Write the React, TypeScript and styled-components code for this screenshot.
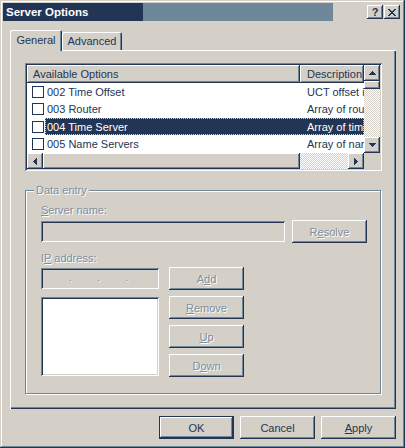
import React from 'react'
import styled, { createGlobalStyle, css } from 'styled-components'

const FACE = '#d4d0c8'
const DARK = '#233554'
const SHADOW = '#6f8899'
const WHITE = '#ffffff'
const DISABLED = '#7d8e9d'

const GlobalStyle = createGlobalStyle`
  html, body { margin: 0; padding: 0; background: ${FACE}; }
  body {
    font-family: "Liberation Sans", Arial, sans-serif;
    font-size: 11px;
    color: ${DARK};
  }
  * { box-sizing: border-box; }
`

const raised = css`
  box-shadow: inset -1px -1px ${DARK}, inset 1px 1px ${WHITE}, inset -2px -2px ${SHADOW}, inset 2px 2px ${FACE};
`
const sunken = css`
  box-shadow: inset 1px 1px ${SHADOW}, inset -1px -1px ${WHITE}, inset 2px 2px ${DARK}, inset -2px -2px ${FACE};
`
const disabledText = css`
  color: ${DISABLED};
  text-shadow: 1px 1px 0 ${WHITE};
`

const Window = styled.div`
  width: 405px;
  height: 448px;
  padding: 3px;
  display: flex;
  flex-direction: column;
  background: ${FACE};
  box-shadow: inset -1px -1px ${DARK}, inset 1px 1px ${FACE}, inset -2px -2px ${SHADOW}, inset 2px 2px ${WHITE};
`

const TitleBar = styled.div`
  height: 18px;
  display: flex;
  align-items: center;
  padding: 0 2px 0 3px;
  background: linear-gradient(to right, ${DARK} 0 140px, ${SHADOW} 140px 330px, ${FACE} 330px);
`

const Title = styled.div`
  flex: 1;
  color: ${WHITE};
  font-weight: bold;
  font-size: 11.5px;
  line-height: 18px;
`

const CaptionButton = styled.div`
  width: 16px;
  height: 14px;
  margin-left: 1px;
  display: flex;
  align-items: center;
  justify-content: center;
  font-weight: bold;
  font-size: 11px;
  line-height: 14px;
  ${raised}
`

const Body = styled.div`
  flex: 1;
  display: flex;
  flex-direction: column;
  padding: 9px 6px 0 7px;
`

const TabStrip = styled.div`
  display: flex;
  align-items: flex-end;
  height: 20px;
`

const Tab = styled.div<{ $active?: boolean }>`
  position: relative;
  width: ${({ $active }) => ($active ? 52 : 60)}px;
  height: ${({ $active }) => ($active ? 21 : 18)}px;
  margin-bottom: ${({ $active }) => ($active ? -1 : 0)}px;
  z-index: ${({ $active }) => ($active ? 1 : 0)};
  background: ${FACE};
  border-radius: 2px 2px 0 0;
  display: flex;
  align-items: center;
  justify-content: center;
  padding-bottom: ${({ $active }) => ($active ? 2 : 0)}px;
  box-shadow: inset 1px 1px ${WHITE}, inset -1px 0 ${DARK}, inset -2px 0 ${SHADOW};
`

const TabPanel = styled.div`
  width: 386px;
  height: 359px;
  padding: 13px 0 0 15px;
  display: flex;
  flex-direction: column;
  box-shadow: inset 1px 1px ${WHITE}, inset -1px -1px ${DARK}, inset -2px -2px ${SHADOW};
`

const ListView = styled.div`
  width: 357px;
  height: 108px;
  padding: 2px;
  background: ${WHITE};
  display: grid;
  grid-template-columns: 337px 16px;
  grid-template-rows: 88px 16px;
  ${sunken}
`

const ListMain = styled.div`
  overflow: hidden;
  display: flex;
  flex-direction: column;
`

const Header = styled.div`
  display: flex;
  height: 18px;
  flex: none;
`

const HeaderCell = styled.div<{ $width?: number }>`
  ${({ $width }) => ($width ? `width: ${$width}px;` : 'flex: 1;')}
  height: 18px;
  line-height: 18px;
  padding-left: ${({ $width }) => ($width ? 6 : 7)}px;
  white-space: nowrap;
  overflow: hidden;
  background: ${FACE};
  ${raised}
`

const Row = styled.div`
  display: flex;
  align-items: center;
  height: 17.5px;
  flex: none;
`

const Check = styled.span`
  width: 12px;
  height: 12px;
  flex: none;
  margin: 0 1px 0 5px;
  border: 1px solid ${DARK};
  background: ${WHITE};
`

const RowBody = styled.div<{ $selected?: boolean }>`
  flex: 1;
  display: flex;
  height: 17px;
  align-items: center;
  white-space: nowrap;
  overflow: hidden;
  background: ${({ $selected }) => ($selected ? DARK : 'transparent')};
  color: ${({ $selected }) => ($selected ? WHITE : DARK)};
  outline: ${({ $selected }) => ($selected ? `1px dotted ${FACE}` : 'none')};
  outline-offset: -1px;
`

const NameCell = styled.span`
  width: 255px;
  flex: none;
  padding-left: 2px;
`

const DescCell = styled.span`
  flex: 1;
  min-width: 0;
  padding-left: 7px;
  overflow: hidden;
`

const ScrollV = styled.div`
  display: flex;
  flex-direction: column;
  background-color: ${WHITE};
  background-image: repeating-conic-gradient(${FACE} 0 25%, ${WHITE} 0 50%);
  background-size: 2px 2px;
`

const ScrollH = styled.div`
  display: flex;
  background-color: ${WHITE};
  background-image: repeating-conic-gradient(${FACE} 0 25%, ${WHITE} 0 50%);
  background-size: 2px 2px;
`

const ScrollButton = styled.div`
  width: 16px;
  height: 16px;
  flex: none;
  display: flex;
  align-items: center;
  justify-content: center;
  background: ${FACE};
  ${raised}
`

const Thumb = styled.div<{ $size: number; $vertical?: boolean }>`
  flex: none;
  ${({ $size, $vertical }) => ($vertical ? `height: ${$size}px; width: 16px;` : `width: ${$size}px; height: 16px;`)}
  background: ${FACE};
  ${raised}
`

const Track = styled.div`
  flex: 1;
`

const Corner = styled.div`
  background: ${FACE};
`

const GroupBox = styled.div`
  position: relative;
  margin-top: 19px;
  width: 356px;
  height: 204px;
  border: 1px solid ${SHADOW};
  box-shadow: inset 1px 1px ${WHITE}, 1px 1px ${WHITE};
  padding: 13px 0 0 15px;
  display: flex;
  flex-direction: column;
`

const Legend = styled.span`
  position: absolute;
  top: -7px;
  left: 8px;
  padding: 0 2px;
  line-height: 13px;
  background: ${FACE};
  ${disabledText}
`

const Label = styled.div<{ $top?: number }>`
  line-height: 13px;
  height: 13px;
  margin-top: ${({ $top }) => $top ?? 0}px;
  ${disabledText}
`

const FieldRow = styled.div<{ $top?: number }>`
  display: flex;
  align-items: center;
  gap: 7px;
  margin-top: ${({ $top }) => $top ?? 0}px;
`

const TextBox = styled.div<{ $width: number; $height: number; $white?: boolean; $top?: number }>`
  width: ${({ $width }) => $width}px;
  height: ${({ $height }) => $height}px;
  margin-top: ${({ $top }) => $top ?? 0}px;
  background: ${({ $white }) => ($white ? WHITE : FACE)};
  ${sunken}
`

const IpDots = styled.div`
  display: flex;
  gap: 25px;
  padding: 2px 0 0 28px;
  line-height: 15px;
  ${disabledText}
`

const Lower = styled.div`
  display: flex;
  gap: 10px;
  margin-top: 2px;
`

const Column = styled.div<{ $gap?: number }>`
  display: flex;
  flex-direction: column;
  gap: ${({ $gap }) => $gap ?? 0}px;
`

const Button = styled.button<{ $default?: boolean; $disabled?: boolean }>`
  width: 75px;
  height: 23px;
  flex: none;
  border: none;
  padding: 0;
  background: ${FACE};
  font-family: inherit;
  font-size: 11px;
  color: ${DARK};
  ${({ $disabled }) => $disabled && disabledText}
  ${({ $default }) =>
    $default
      ? `box-shadow: inset 0 0 0 1px ${DARK}, inset -2px -2px ${DARK}, inset 2px 2px ${WHITE}, inset -3px -3px ${SHADOW};`
      : `box-shadow: inset -1px -1px ${DARK}, inset 1px 1px ${WHITE}, inset -2px -2px ${SHADOW}, inset 2px 2px ${FACE};`}
  u { text-decoration: underline; }
`

const ButtonRow = styled.div`
  display: flex;
  justify-content: flex-end;
  gap: 6px;
  margin-top: 7px;
`

type Px = [number, number, number, number]

function Pixels({ w, h, rects }: { w: number; h: number; rects: Px[] }) {
  return (
    <svg width={w} height={h} viewBox={`0 0 ${w} ${h}`} shapeRendering="crispEdges">
      {rects.map(([x, y, rw, rh], i) => (
        <rect key={i} x={x} y={y} width={rw} height={rh} fill={DARK} />
      ))}
    </svg>
  )
}

const arrowUp: Px[] = [[3, 0, 1, 1], [2, 1, 3, 1], [1, 2, 5, 1], [0, 3, 7, 1]]
const arrowDown: Px[] = [[0, 0, 7, 1], [1, 1, 5, 1], [2, 2, 3, 1], [3, 3, 1, 1]]
const arrowLeft: Px[] = [[0, 3, 1, 1], [1, 2, 1, 3], [2, 1, 1, 5], [3, 0, 1, 7]]
const arrowRight: Px[] = [[0, 0, 1, 7], [1, 1, 1, 5], [2, 2, 1, 3], [3, 3, 1, 1]]
const closeX: Px[] = [
  [0, 0, 2, 1], [6, 0, 2, 1],
  [1, 1, 2, 1], [5, 1, 2, 1],
  [2, 2, 4, 1],
  [3, 3, 2, 1],
  [2, 4, 4, 1],
  [1, 5, 2, 1], [5, 5, 2, 1],
  [0, 6, 2, 1], [6, 6, 2, 1],
]

// the description column is narrow, so only the start of each text shows
const options = [
  { name: '002 Time Offset', desc: 'UCT offset in' },
  { name: '003 Router', desc: 'Array of route' },
  { name: '004 Time Server', desc: 'Array of time' },
  { name: '005 Name Servers', desc: 'Array of nam' },
]

export default function App() {
  return (
    <>
      <GlobalStyle />
      <Window>
        <TitleBar>
          <Title>Server Options</Title>
          <CaptionButton>?</CaptionButton>
          <CaptionButton>
            <Pixels w={8} h={7} rects={closeX} />
          </CaptionButton>
        </TitleBar>
        <Body>
          <TabStrip>
            <Tab $active>General</Tab>
            <Tab>Advanced</Tab>
          </TabStrip>
          <TabPanel>
            <ListView>
              <ListMain>
                <Header>
                  <HeaderCell $width={273}>Available Options</HeaderCell>
                  <HeaderCell>Description</HeaderCell>
                </Header>
                {options.map(o => (
                  <Row key={o.name}>
                    <Check />
                    <RowBody $selected={o.name.startsWith('004')}>
                      <NameCell>{o.name}</NameCell>
                      <DescCell>{o.desc}</DescCell>
                    </RowBody>
                  </Row>
                ))}
              </ListMain>
              <ScrollV>
                <ScrollButton>
                  <Pixels w={7} h={4} rects={arrowUp} />
                </ScrollButton>
                <Thumb $vertical $size={8} />
                <Track />
                <ScrollButton>
                  <Pixels w={7} h={4} rects={arrowDown} />
                </ScrollButton>
              </ScrollV>
              <ScrollH>
                <ScrollButton>
                  <Pixels w={4} h={7} rects={arrowLeft} />
                </ScrollButton>
                <Thumb $size={257} />
                <Track />
                <ScrollButton>
                  <Pixels w={4} h={7} rects={arrowRight} />
                </ScrollButton>
              </ScrollH>
              <Corner />
            </ListView>

            <GroupBox>
              <Legend>Data entry</Legend>
              <Label>
                <u>S</u>erver name:
              </Label>
              <FieldRow $top={3}>
                <TextBox $width={244} $height={21} />
                <Button $disabled>
                  R<u>e</u>solve
                </Button>
              </FieldRow>
              <Label $top={9}>
                I<u>P</u> address:
              </Label>
              <Lower>
                <Column $gap={8}>
                  <TextBox $width={118} $height={21} $top={1}>
                    <IpDots>
                      <span>.</span>
                      <span>.</span>
                      <span>.</span>
                    </IpDots>
                  </TextBox>
                  <TextBox $width={118} $height={79} $white />
                </Column>
                <Column $gap={6}>
                  <Button $disabled>
                    A<u>d</u>d
                  </Button>
                  <Button $disabled>
                    <u>R</u>emove
                  </Button>
                  <Button $disabled>
                    <u>U</u>p
                  </Button>
                  <Button $disabled>
                    D<u>o</u>wn
                  </Button>
                </Column>
              </Lower>
            </GroupBox>
          </TabPanel>
          <ButtonRow>
            <Button $default>OK</Button>
            <Button>Cancel</Button>
            <Button>
              <u>A</u>pply
            </Button>
          </ButtonRow>
        </Body>
      </Window>
    </>
  )
}
